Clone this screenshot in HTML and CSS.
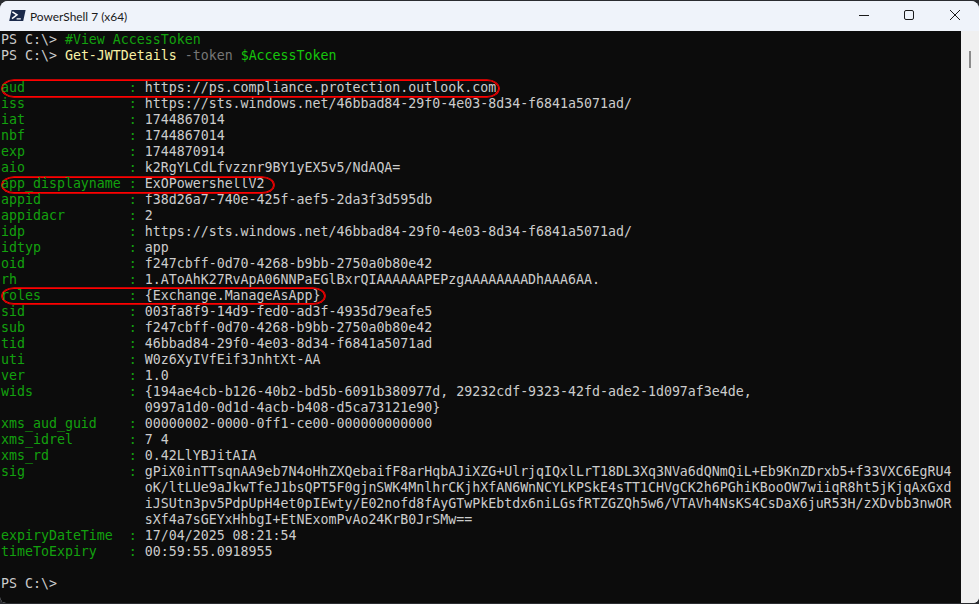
FILE: index.html
```html
<!DOCTYPE html>
<html lang="en">
<head>
<meta charset="utf-8">
<title>PowerShell 7 (x64)</title>
<link rel="stylesheet" href="styles.css">
</head>
<body>
<div class="window">
  <header class="titlebar">
    <svg class="app-icon" width="17" height="11" viewBox="0 0 17 11"><path d="M2.6 0H16.6L14.2 11H.2Z" fill="#1b2a4a"/><path d="M3.4 1.8 8 4.8 3 8.6" fill="none" stroke="#fff" stroke-width="1.5"/><path d="M7.6 8.9H11.8" stroke="#fff" stroke-width="1.4"/></svg>
    <span class="title">PowerShell 7 (x64)</span>
    <div class="controls">
      <svg class="ctl" width="46" height="30" viewBox="0 0 46 30"><path d="M18 14.5H28" stroke="#1a1a1a" fill="none"/></svg>
      <svg class="ctl" width="46" height="30" viewBox="0 0 46 30"><rect x="17.5" y="9.5" width="9" height="9" rx="1.5" stroke="#1a1a1a" fill="none"/></svg>
      <svg class="ctl" width="46" height="30" viewBox="0 0 46 30"><path d="M17 9 27 19M27 9 17 19" stroke="#1a1a1a" fill="none"/></svg>
    </div>
  </header>
  <div class="content">
    <main class="terminal">
<div class="line">PS C:\&gt; <span class="comment">#View AccessToken</span></div>
<div class="line">PS C:\&gt; <span class="cmd">Get-JWTDetails</span> <span class="param">-token</span> <span class="var">$AccessToken</span></div>
<div class="line"> </div>
<div class="line mark"><span class="key">aud             : </span>https://ps.compliance.protection.outlook.com<i class="ring ring-aud"></i></div>
<div class="line"><span class="key">iss             : </span>https://sts.windows.net/46bbad84-29f0-4e03-8d34-f6841a5071ad/</div>
<div class="line"><span class="key">iat             : </span>1744867014</div>
<div class="line"><span class="key">nbf             : </span>1744867014</div>
<div class="line"><span class="key">exp             : </span>1744870914</div>
<div class="line"><span class="key">aio             : </span>k2RgYLCdLfvzznr9BY1yEX5v5/NdAQA=</div>
<div class="line mark"><span class="key">app_displayname : </span>ExOPowershellV2<i class="ring ring-app"></i></div>
<div class="line"><span class="key">appid           : </span>f38d26a7-740e-425f-aef5-2da3f3d595db</div>
<div class="line"><span class="key">appidacr        : </span>2</div>
<div class="line"><span class="key">idp             : </span>https://sts.windows.net/46bbad84-29f0-4e03-8d34-f6841a5071ad/</div>
<div class="line"><span class="key">idtyp           : </span>app</div>
<div class="line"><span class="key">oid             : </span>f247cbff-0d70-4268-b9bb-2750a0b80e42</div>
<div class="line"><span class="key">rh              : </span>1.AToAhK27RvApA06NNPaEGlBxrQIAAAAAAPEPzgAAAAAAAADhAAA6AA.</div>
<div class="line mark"><span class="key">roles           : </span>{Exchange.ManageAsApp}<i class="ring ring-roles"></i></div>
<div class="line"><span class="key">sid             : </span>003fa8f9-14d9-fed0-ad3f-4935d79eafe5</div>
<div class="line"><span class="key">sub             : </span>f247cbff-0d70-4268-b9bb-2750a0b80e42</div>
<div class="line"><span class="key">tid             : </span>46bbad84-29f0-4e03-8d34-f6841a5071ad</div>
<div class="line"><span class="key">uti             : </span>W0z6XyIVfEif3JnhtXt-AA</div>
<div class="line"><span class="key">ver             : </span>1.0</div>
<div class="line"><span class="key">wids            : </span>{194ae4cb-b126-40b2-bd5b-6091b380977d, 29232cdf-9323-42fd-ade2-1d097af3e4de,</div>
<div class="line">                  0997a1d0-0d1d-4acb-b408-d5ca73121e90}</div>
<div class="line"><span class="key">xms_aud_guid    : </span>00000002-0000-0ff1-ce00-000000000000</div>
<div class="line"><span class="key">xms_idrel       : </span>7 4</div>
<div class="line"><span class="key">xms_rd          : </span>0.42LlYBJitAIA</div>
<div class="line"><span class="key">sig             : </span>gPiX0inTTsqnAA9eb7N4oHhZXQebaifF8arHqbAJiXZG+UlrjqIQxlLrT18DL3Xq3NVa6dQNmQiL+Eb9KnZDrxb5+f33VXC6EgRU4</div>
<div class="line">                  oK/ltLUe9aJkwTfeJ1bsQPT5F0gjnSWK4MnlhrCKjhXfAN6WnNCYLKPSkE4sTT1CHVgCK2h6PGhiKBooOW7wiiqR8ht5jKjqAxGxd</div>
<div class="line">                  iJSUtn3pv5PdpUpH4et0pIEwty/E02nofd8fAyGTwPkEbtdx6niLGsfRTZGZQh5w6/VTAVh4NsKS4CsDaX6juR53H/zXDvbb3nwOR</div>
<div class="line">                  sXf4a7sGEYxHhbgI+EtNExomPvAo24KrB0JrSMw==</div>
<div class="line"><span class="key">expiryDateTime  : </span>17/04/2025 08:21:54</div>
<div class="line"><span class="key">timeToExpiry    : </span>00:59:55.0918955</div>
<div class="line"> </div>
<div class="line">PS C:\&gt;</div>
    </main>
    <aside class="scrollbar"><div class="thumb"></div></aside>
  </div>
</div>
</body>
</html>
```
FILE: styles.css
```css
* { box-sizing: border-box; }
html, body { margin: 0; height: 100%; }
body { background: #2a2c30; overflow: hidden; padding-top: 1px; }
.window {
  height: 602px;
  display: flex;
  flex-direction: column;
  border-radius: 8px 8px 6px 6px;
  overflow: hidden;
  background: #eff3fa;
}
.titlebar {
  height: 30px;
  flex: none;
  display: flex;
  align-items: center;
  padding-left: 9px;
  background: #eff3fa;
}
.app-icon { flex: none; margin-top: -1px; }
.title {
  margin-left: 4px;
  font: 11.9px Lato, sans-serif;
  color: #1a1a1a;
}
.controls { margin-left: auto; display: flex; }
.ctl { display: block; }
.content { flex: 1; display: flex; min-height: 0; }
.terminal {
  flex: 1;
  background: #0c0c0c;
  color: #cccccc;
  padding: 1px 0 0 1px;
  font: 13.28px/16px "DejaVu Sans Mono", monospace;
  overflow: hidden;
}
.line { height: 16px; white-space: pre; }
.mark { position: relative; }
.key { color: #13a10e; position: relative; z-index: 1; }
.comment { color: #13a10e; }
.cmd { color: #f9f1a5; }
.param { color: #767676; }
.var { color: #16c60c; }
.ring {
  position: absolute;
  left: 1px;
  border: 1px solid #ff0000;
  box-shadow: 0 0 0 0.8px #ff0000;
  border-radius: 12px / 50%;
}
.ring-aud { top: 0; height: 17px; width: 497px; }
.ring-app { top: 1px; height: 16px; width: 272px; }
.ring-roles { top: 0; height: 16px; width: 323px; }
.scrollbar {
  width: 18px;
  flex: none;
  background: #f0f0f0;
  padding: 20px 0 0 8px;
}
.thumb { width: 2px; height: 17px; background: #8b8b8b; }
```
